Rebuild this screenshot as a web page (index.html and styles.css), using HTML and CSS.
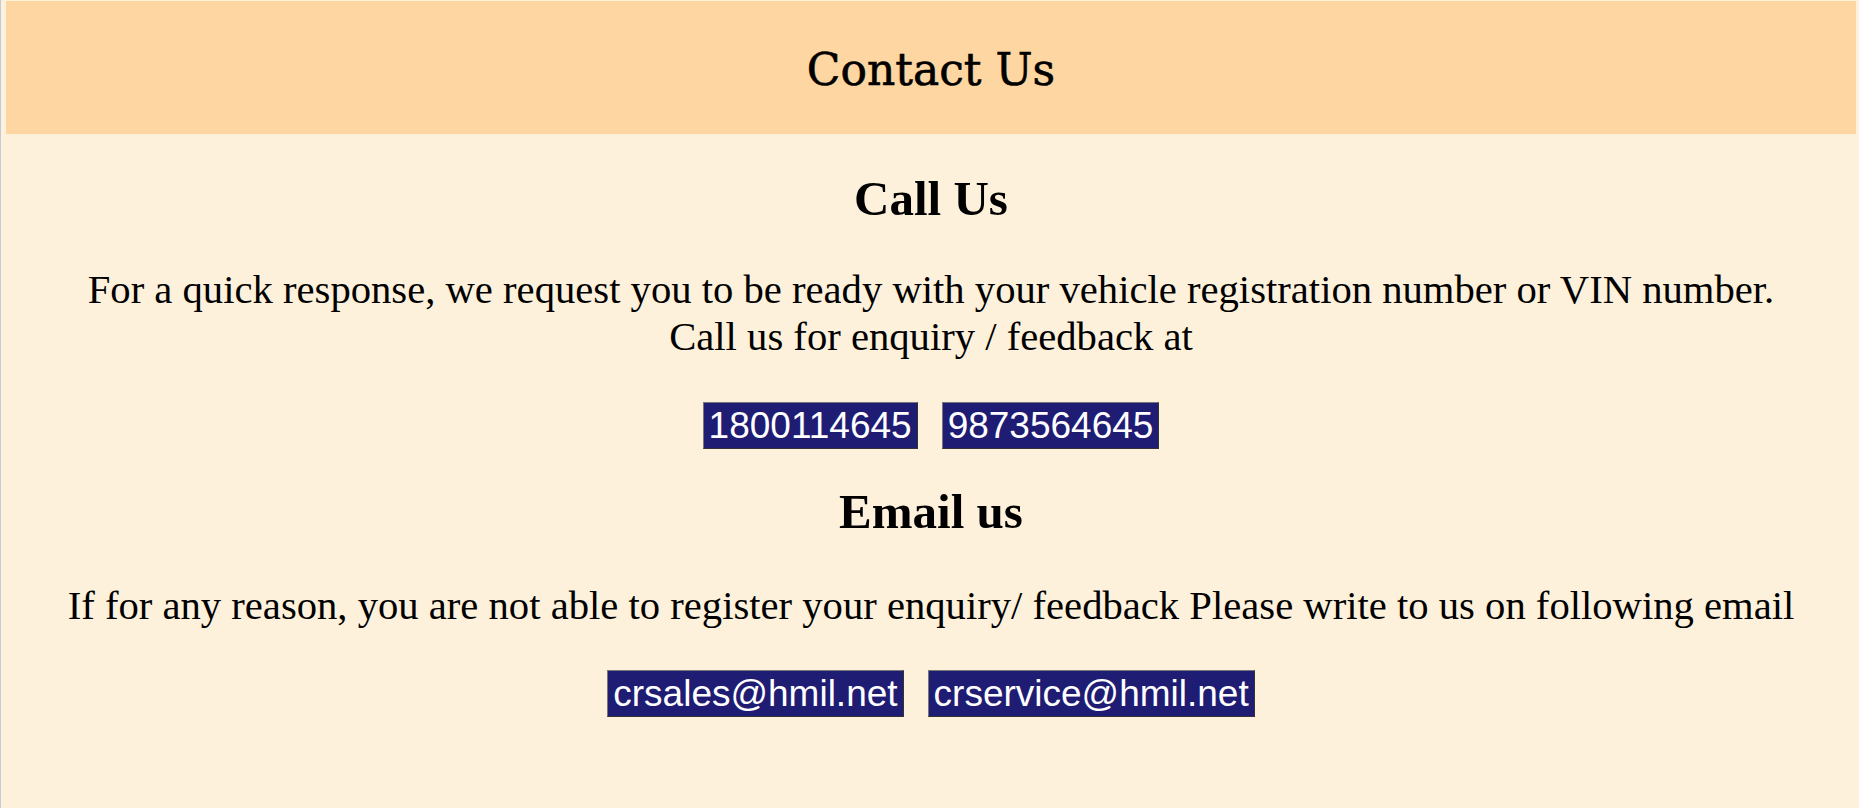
FILE: index.html
```html
<!DOCTYPE html>
<html lang="en">
<head>
<meta charset="utf-8">
<title>Contact Us</title>
<link rel="stylesheet" href="styles.css">
</head>
<body>
<div class="page">
  <header class="banner">
    <h1 class="banner-title">Contact Us</h1>
  </header>
  <main class="content">
    <h2 class="section-title title-call">Call Us</h2>
    <p class="lead lead-call">For a quick response, we request you to be ready with your vehicle registration number or VIN number.<br>Call us for enquiry / feedback at</p>
    <div class="badges badges-phone">
      <span class="badge">1800114645</span>
      <span class="badge">9873564645</span>
    </div>
    <h2 class="section-title title-email">Email us</h2>
    <p class="lead lead-email">If for any reason, you are not able to register your enquiry/ feedback Please write to us on following email</p>
    <div class="badges badges-email">
      <span class="badge">crsales@hmil.net</span>
      <span class="badge">crservice@hmil.net</span>
    </div>
  </main>
</div>
</body>
</html>
```

FILE: styles.css
```css
html {
  margin: 0;
  padding: 0;
  background: #fef1db;
  border-left: 1px solid #c4cad6;
  min-height: 100%;
  box-sizing: border-box;
}

body {
  margin: 0;
  padding: 0;
  background: #fef1db;
  color: #000;
  font-family: "Liberation Serif", "Times New Roman", serif;
}

.page {
  padding: 1px 3px 0 5px;
}

.banner {
  height: 133px;
  background: #fed6a1;
  display: flex;
  align-items: center;
  justify-content: center;
}

.banner-title {
  margin: 0;
  font-family: "DejaVu Serif", serif;
  font-weight: normal;
  font-size: 44px;
  line-height: 52px;
  padding-top: 5px;
  -webkit-text-stroke: 0.6px #000;
}

.content {
  display: flex;
  flex-direction: column;
  align-items: center;
  text-align: center;
}

.section-title {
  margin: 0;
  font-family: "Liberation Serif", "Times New Roman", serif;
  font-weight: bold;
  font-size: 49px;
  line-height: 56px;
}

.title-call {
  margin-top: 37px;
}

.title-email {
  margin-top: 35px;
}

.lead {
  margin: 39px 0 0;
  font-size: 40.65px;
  line-height: 47px;
}

.lead-email {
  margin-top: 42px;
}

.badges {
  display: flex;
  justify-content: center;
  gap: 24px;
}

.badges-phone {
  margin-top: 42px;
}

.badges-email {
  margin-top: 41px;
}

.badge {
  display: inline-block;
  background: #1f1c73;
  color: #fff;
  font-family: "Liberation Sans", Arial, sans-serif;
  font-size: 37px;
  line-height: 45px;
  padding: 0 5px;
  border: 1px solid;
  border-color: #777 #333 #333 #777;
}
```
